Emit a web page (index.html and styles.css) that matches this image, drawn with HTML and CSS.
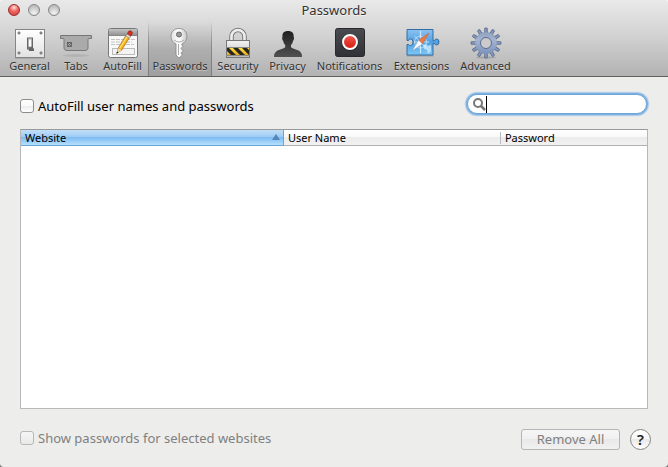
FILE: index.html
```html
<!DOCTYPE html>
<html lang="en">
  <head>
    <meta charset="UTF-8" />
    <meta name="viewport" content="width=device-width, initial-scale=1.0" />
    <title>Passwords</title>
    <link rel="stylesheet" href="styles.css">
  </head>
  <body>
    <div class="window">
      <header class="top">
        <div class="titlebar">
          <div class="lights">
            <button class="light close" aria-label="Close"></button>
            <button class="light" aria-label="Minimize"></button>
            <button class="light" aria-label="Zoom"></button>
          </div>
          <h1>Passwords</h1>
        </div>
        <nav class="toolbar">
          <button class="item">
            <svg viewBox="0 0 32 32">
              <defs>
                <linearGradient id="plate" x2="0" y2="1"><stop stop-color="#fff"/><stop offset="1" stop-color="#e2e2e2"/></linearGradient>
              </defs>
              <path d="M1 31.500h30" stroke="#777" opacity=".3"/>
              <rect x="1.500" y="2.500" width="29" height="28" fill="url(#plate)" stroke="#858585"/>
              <g fill="#999" stroke="#666" stroke-width=".6"><circle cx="5" cy="6" r="1.200"/><circle cx="27" cy="6" r="1.200"/><circle cx="5" cy="26" r="1.200"/><circle cx="27" cy="26" r="1.200"/></g>
              <rect x="13.500" y="11" width="5" height="11" fill="#e4e4e4" stroke="#666"/>
              <path d="M14 19h4l2 3v2h-5z" fill="#666"/>
              <path d="M14.500 12h3v8h-3z" fill="#fafafa" stroke="#888" stroke-width=".6"/>
            </svg>
            <span>General</span>
          </button>
          <button class="item">
            <svg viewBox="0 0 32 32">
              <ellipse cx="16" cy="28.500" rx="13" ry="1.500" fill="#777" opacity=".2"/>
              <path d="M.5 8.500h31v3h-2.500c-1 0-1 .5-1 2v7c0 2-1 3-3 3H7c-2 0-3-1-3-3v-7c0-1.500 0-2-1-2H.5z" fill="#aaa" stroke="#777"/>
              <rect x="7.500" y="15.500" width="4" height="4" fill="#aaa" stroke="#555" stroke-width=".8"/>
              <path d="M8 16l3 3m0-3l-3 3" stroke="#555" stroke-width=".8"/>
            </svg>
            <span>Tabs</span>
          </button>
          <button class="item">
            <svg viewBox="0 0 32 32">
              <defs><linearGradient id="bar" x2="0" y2="1"><stop stop-color="#c4c4c4"/><stop offset="1" stop-color="#939393"/></linearGradient></defs>
              <rect x="1.500" y="1.500" width="29" height="29" rx="2" fill="#f8f8f8" stroke="#777"/>
              <path d="M2 8V3.500Q2 2 3.500 2h25Q30 2 30 3.500V8z" fill="url(#bar)"/>
              <path d="M2 8.500h28" stroke="#888"/>
              <path d="M4 12.500h24M4 15h21M4 17.500h23" stroke="#c5c5c5" stroke-dasharray="4 1"/>
              <rect x="5.500" y="21.500" width="22" height="6" fill="#f3f3f3" stroke="#bbb"/>
              <path d="M10 26l1.500-5.500 8-13 3.500 2.300-8.500 13.500z" fill="#f5b51f" stroke="#9a6717" stroke-width=".7"/>
              <path d="M12.800 21l8-12.500" stroke="#ffe076" stroke-width="1.200"/>
              <path d="M20 7.500l1.500-3q1-1.500 3-.3 1.500 1 .7 2.500L23.500 9.500z" fill="#d62c20" stroke="#861f18" stroke-width=".6"/>
              <path d="M18.800 8.800l1.200-1.800 3.700 2.400-1.200 1.800z" fill="#ddd" stroke="#777" stroke-width=".5"/>
              <path d="M9.800 26.500l1.500-5.200 3 2z" fill="#f3dda8"/><path d="M9.300 27l.8-2.500 1.500 1z" fill="#222"/>
            </svg>
            <span>AutoFill</span>
          </button>
          <button class="item current">
            <svg viewBox="0 0 32 32">
              <defs><linearGradient id="key" x2="1" y2="0"><stop stop-color="#e2e2e2"/><stop offset=".5" stop-color="#fff"/><stop offset="1" stop-color="#c5c5c5"/></linearGradient></defs>
              <path d="M15 1.500c-5 0-8 3.500-8 8 0 3.500 2 6 5 7.500v11l3 3 3.500-3-1.500-2 2.500-2-2.500-2.500 2-2-1-1.500v-1c3-1.500 5-4 5-7.500 0-4.500-3-8-8-8z" fill="url(#key)" stroke="#858585" stroke-width=".8"/>
              <circle cx="15" cy="7.500" r="2.500" fill="#999" stroke="#666"/>
              <path d="M10 13q5 4 10 0M14.500 17v11" fill="none" stroke="#aaa"/>
            </svg>
            <span>Passwords</span>
          </button>
          <button class="item">
            <svg viewBox="0 0 32 32">
              <defs>
                <linearGradient id="lock" x2="0" y2="1"><stop stop-color="#f4f4f4"/><stop offset="1" stop-color="#bbb"/></linearGradient>
                <linearGradient id="gold" x2="0" y2="1"><stop stop-color="#ffe24a"/><stop offset="1" stop-color="#e5a91b"/></linearGradient>
              </defs>
              <path d="M9.500 15V9.500a6.500 6.500 0 0 1 13 0V15" fill="none" stroke="#777" stroke-width="4.500"/>
              <path d="M9.500 15V9.500a6.500 6.500 0 0 1 13 0V15" fill="none" stroke="#eee" stroke-width="2.600"/>
              <rect x="4.500" y="13.500" width="23" height="17" fill="url(#lock)" stroke="#777"/>
              <path d="M5 21h22v7H5z" fill="url(#gold)"/>
              <path d="M5 21h2l7 7H9l-4-4zM11 21h5l7 7h-5zM20 21h5l2 2v5z" fill="#29261e"/>
              <path d="M4 20.500h24M4 28.500h24" stroke="#888"/>
            </svg>
            <span>Security</span>
          </button>
          <button class="item">
            <svg viewBox="0 0 32 32">
              <defs><linearGradient id="man" x2="0" y2="1"><stop stop-color="#202020"/><stop offset="1" stop-color="#505050"/></linearGradient></defs>
              <path d="M16 4c-4 0-6 2-5.500 6-.8.500-.3 3 .7 4 .4 2 1 3 2 4v2c-1 2-7 2.500-9 4.500Q2 26 2 30h28q0-4-2-5.500c-2-2-8-2.500-9-4.500v-2c1-1 1.600-2 2-4 1-1 1.500-3.500.7-4C22 6 20 4 16 4z" fill="url(#man)"/>
            </svg>
            <span>Privacy</span>
          </button>
          <button class="item">
            <svg viewBox="0 0 32 32">
              <defs>
                <linearGradient id="dark" x2="0" y2="1"><stop stop-color="#4a4b50"/><stop offset="1" stop-color="#303136"/></linearGradient>
                <linearGradient id="red" x2="0" y2="1"><stop stop-color="#f05a50"/><stop offset="1" stop-color="#d81910"/></linearGradient>
              </defs>
              <rect x="1.500" y="1.500" width="29" height="28" rx="2" fill="url(#dark)" stroke="#29292c"/>
              <circle cx="16" cy="15.500" r="8.500" fill="#25262a"/>
              <circle cx="16" cy="15" r="7" fill="url(#red)" stroke="#fff" stroke-width="2"/>
            </svg>
            <span>Notifications</span>
          </button>
          <button class="item">
            <svg viewBox="0 0 32 32">
              <defs><linearGradient id="blue" x2="0" y2="1"><stop stop-color="#8cc3f2"/><stop offset=".5" stop-color="#4f9fe0"/><stop offset="1" stop-color="#7cc8f8"/></linearGradient></defs>
              <path d="M.5 28.500h27" stroke="#555" stroke-width="2" opacity=".3"/>
              <path d="M1 2.500h26v11h1.500q.5-1.500 2-1.500 2.500 0 2.500 3t-2.500 3q-1.500 0-2-1.500H27v11.500H1V17.500h1.500q.5 1 2 1 2.500 0 2.500-3.500t-2.500-3q-1.500 0-2 1.500H1z" fill="url(#blue)" stroke="#326da5"/>
              <path d="M17 18l3-1 2 2 3-1v6l-3 3-1-4-3-1z" fill="#c7eaff" opacity=".8"/>
              <g stroke="#e4f4ff" fill="none" opacity=".8"><circle cx="14.500" cy="15" r="6" stroke-width=".8"/><path d="M14.500 4v22M8 15h15" stroke-width="1.200"/><path d="M8.500 9l12 12M20.500 9l-12 12" stroke-width=".8"/></g>
              <path d="M23 6l-6.500 11-4-4z" fill="#ee7842" stroke="#b76346" stroke-width=".5"/>
              <path d="M6 24l6.500-11 4 4z" fill="#f6faff" stroke="#7a9ab5" stroke-width=".5"/>
            </svg>
            <span>Extensions</span>
          </button>
          <button class="item">
            <svg viewBox="0 0 32 32">
              <defs>
                <linearGradient id="steel" gradientUnits="userSpaceOnUse" x1="16" y1="1" x2="16" y2="31"><stop stop-color="#8796b3"/><stop offset=".4" stop-color="#a3b5d2"/><stop offset="1" stop-color="#6e87b6"/></linearGradient>
              </defs>
              <ellipse cx="16" cy="30.500" rx="10" ry="1" fill="#666" opacity=".3"/>
              <g fill="#8799bb" stroke="#56688a" stroke-width=".8">
                <path id="tooth" d="M13.500 6.500L14.700 5V1.200q1.300-.6 2.600 0V5l1.200 1.500z"/>
                <use href="#tooth" transform="rotate(30 16 16)"/><use href="#tooth" transform="rotate(60 16 16)"/>
                <use href="#tooth" transform="rotate(90 16 16)"/><use href="#tooth" transform="rotate(120 16 16)"/>
                <use href="#tooth" transform="rotate(150 16 16)"/><use href="#tooth" transform="rotate(180 16 16)"/>
                <use href="#tooth" transform="rotate(210 16 16)"/><use href="#tooth" transform="rotate(240 16 16)"/>
                <use href="#tooth" transform="rotate(270 16 16)"/><use href="#tooth" transform="rotate(300 16 16)"/>
                <use href="#tooth" transform="rotate(330 16 16)"/>
              </g>
              <circle cx="16" cy="16" r="8" fill="none" stroke="url(#steel)" stroke-width="5.500"/>
              <circle cx="16" cy="16" r="5.500" fill="#cbcbcb" stroke="#5c6c8c"/>
            </svg>
            <span>Advanced</span>
          </button>
        </nav>
      </header>

      <main class="content">
        <div class="row">
          <label class="check"><input type="checkbox" /> AutoFill user names and passwords</label>
          <div class="search">
            <svg viewBox="0 0 14 14"><circle cx="6" cy="6" r="4" fill="none" stroke="#777" stroke-width="2"/><path d="M9 9l4 4" stroke="#777" stroke-width="2.500"/></svg>
            <span class="caret"></span>
            <input type="text" aria-label="Search" />
          </div>
        </div>
        <div class="list">
          <table>
            <thead>
              <tr>
                <th class="site sorted">Website</th>
                <th class="user">User Name</th>
                <th>Password</th>
              </tr>
            </thead>
            <tbody></tbody>
          </table>
        </div>
        <div class="row bottom">
          <label class="check off"><input type="checkbox" disabled /> Show passwords for selected websites</label>
          <div class="buttons">
            <button class="remove" disabled>Remove All</button>
            <button class="help" aria-label="Help">?</button>
          </div>
        </div>
      </main>
    </div>
  </body>
</html>
```
FILE: styles.css
```css
* {
  box-sizing: border-box;
  margin: 0;
  padding: 0;
}
body {
  background: linear-gradient(#f4f4f4 50%, #777 50%);
  font-family: "Noto Sans", "Open Sans", sans-serif;
  font-size: 13px;
  color: #000;
}
button,
input {
  font-family: inherit;
}
.window {
  display: flex;
  flex-direction: column;
  min-height: 100vh;
  border-radius: 4px;
  overflow: hidden;
  background-color: #ededec;
}

/* title bar and toolbar share one gradient */
.top {
  border-bottom: 1px solid #606060;
  background: linear-gradient(#e9e9e9, #d3d3d3 45%, #b2b2b2);
}
.titlebar {
  display: grid;
  grid-template-columns: 1fr auto 1fr;
  height: 22px;
}
.titlebar h1 {
  font-size: 13px;
  font-weight: normal;
  line-height: 20px;
  color: #333;
  text-shadow: 0 1px 0 #f4f4f4;
}
.lights {
  display: flex;
  align-items: center;
  height: 20px;
  gap: 8px;
  padding-left: 8px;
}
.light {
  width: 12px;
  height: 12px;
  border: 1px solid #858585;
  border-radius: 50%;
  background: radial-gradient(circle at 50% 80%, #f4f4f4, #bdbdbd 75%);
}
.light.close {
  border-color: #9c2c2b;
  background: radial-gradient(circle at 50% 25%, #ffd0cb 5%, #ee6660 45%, #d33a38);
}
.toolbar {
  display: grid;
  grid-template-columns: 51px 42px 51px 64px 52px 47px 77px 67px 61px;
  padding-left: 4px;
}
.item {
  display: flex;
  flex-direction: column;
  align-items: center;
  height: 54px;
  padding-top: 5px;
  border: 0;
  background: none;
  font-size: 11px;
  line-height: 14px;
  white-space: nowrap;
  color: #333;
  text-shadow: 0 1px 0 rgba(255, 255, 255, 0.4);
}
.item svg {
  width: 32px;
  height: 32px;
  overflow: visible;
}
.item.current {
  border: solid transparent;
  border-width: 0 1px;
  border-image: linear-gradient(rgba(110, 110, 110, 0), #858585 50%, #7c7c7c) 1;
  background: linear-gradient(rgba(130, 130, 130, 0), rgba(130, 130, 130, 0.35) 50%, rgba(130, 130, 130, 0.4));
}

.content {
  display: flex;
  flex-direction: column;
  flex: 1;
  padding: 16px 20px 17px;
}
.row {
  display: flex;
  justify-content: space-between;
  align-items: flex-end;
}
.check {
  display: flex;
  align-items: center;
  gap: 4px;
  line-height: 18px;
}
.check input {
  appearance: none;
  width: 14px;
  height: 14px;
  border: 1px solid #8d8d8d;
  border-radius: 3px;
  background: linear-gradient(#fff, #fafafa 50%, #ececec 50%, #fff);
}
.check.off {
  color: #808080;
}
.check.off input {
  border-color: #b8b8b8;
  background: linear-gradient(#f6f6f6, #e9e9e9);
}
.search {
  display: flex;
  align-items: center;
  width: 180px;
  height: 20px;
  margin: 1px;
  padding: 0 8px 0 4px;
  border: 1px solid #6ea5da;
  border-radius: 10px;
  background-color: #fff;
  box-shadow: 0 0 0 1px #7fb0e0, 0 0 1px 2px #a9c9e8;
}
.search svg {
  flex: none;
  width: 14px;
  height: 14px;
}
.search input {
  width: 100%;
  border: 0;
  outline: 0;
  background: none;
  font-size: 13px;
}
.caret {
  flex: none;
  width: 1px;
  height: 17px;
  background-color: #000;
}

.list {
  flex: 1;
  margin-top: 14px;
  border: 1px solid #b8b8b8;
  border-top-color: #999;
  background-color: #fff;
}
table {
  width: 100%;
  border-collapse: separate;
  border-spacing: 0;
  table-layout: fixed;
}
th {
  height: 16px;
  padding: 0 4px;
  border-bottom: 1px solid #b1b1b1;
  background: linear-gradient(#fff, #f8f8f8 50%, #ececec 50%, #f1f1f1);
  font-size: 11px;
  font-weight: normal;
  line-height: 14px;
  text-align: left;
}
.site {
  width: 42%;
}
.user {
  width: 217px;
  background: linear-gradient(#bbb, #bbb) right / 1px 12px no-repeat,
    linear-gradient(#fff, #f8f8f8 50%, #ececec 50%, #f1f1f1);
}
.sorted {
  position: relative;
  border-right: 1px solid #6ca4d3;
  border-bottom-color: #6aa5d5;
  background: linear-gradient(#c2dff7, #9ccbf4 48%, #7fbcf3 50%, #b4e0fc);
}
.sorted::after {
  content: "";
  position: absolute;
  right: 3px;
  top: 4px;
  border: solid transparent;
  border-width: 0 4px 6px;
  border-bottom-color: #5386bb;
}

.bottom {
  align-items: flex-start;
  margin-top: 20px;
}
.buttons {
  display: flex;
  gap: 10px;
  margin-right: -3px;
}
.remove {
  width: 99px;
  height: 21px;
  border: 1px solid #b5b5b5;
  border-radius: 3px;
  background: linear-gradient(#f6f6f6, #f0f0f0 50%, #e9e9e9 50%, #f1f1f1);
  font-size: 13px;
  line-height: 19px;
  color: #808080;
}
.help {
  width: 21px;
  height: 21px;
  border: 1px solid #858585;
  border-radius: 50%;
  background: linear-gradient(#fff, #f6f6f6 50%, #e9e9e9 50%, #fff);
  font-size: 15px;
  font-weight: 600;
  line-height: 19px;
  color: #222;
}
```
